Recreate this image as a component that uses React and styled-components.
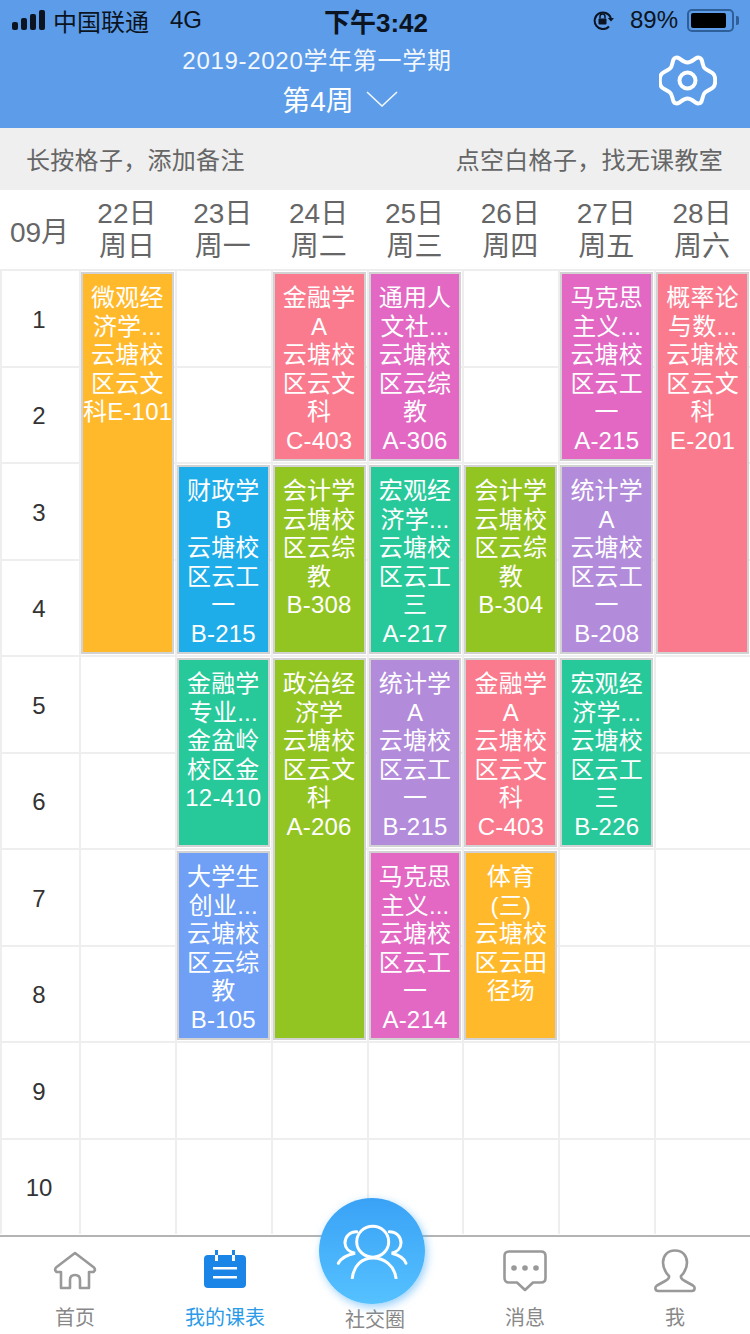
import styled, { createGlobalStyle } from "styled-components";

const fontStack = `"Liberation Sans", "Noto Sans CJK SC", sans-serif`;

const GlobalStyle = createGlobalStyle`
    html, body {
        margin: 0;
        padding: 0;
        background: #fff;
        font-family: ${fontStack};
    }
    * { box-sizing: border-box; }
`;

const Page = styled.div`
    position: relative;
    width: 750px;
    height: 1334px;
    overflow: hidden;
    display: flex;
    flex-direction: column;
    background: #fff;
`;

const TopBlue = styled.div`
    height: 128px;
    background: #5c9ce9;
    flex-shrink: 0;
`;

const StatusBar = styled.div`
    height: 40px;
    padding: 0 16px 0 12px;
    display: flex;
    align-items: center;
    justify-content: space-between;
    color: #0b1420;
    font-size: 24px;
`;

const StatusSide = styled.div`
    flex: 1;
    display: flex;
    align-items: center;
    justify-content: ${(p) => (p.$right ? "flex-end" : "flex-start")};
    gap: ${(p) => p.$gap}px;
`;

const StatusText = styled.span`
    margin-left: ${(p) => p.$ml || 0}px;
`;

const Clock = styled.div`
    padding-left: 6px;
    font-size: 26px;
    font-weight: 700;
    color: #0b1420;
`;

const Battery = styled.div`
    width: 47px;
    height: 23px;
    border: 2px solid #2f5f98;
    border-radius: 5px;
    padding: 2px;
    position: relative;
    &::after {
        content: "";
        position: absolute;
        right: -7px;
        top: 5px;
        width: 3px;
        height: 9px;
        border-radius: 0 2px 2px 0;
        background: #2f5f98;
    }
`;

const BatteryFill = styled.div`
    width: 89%;
    height: 100%;
    background: #000;
    border-radius: 2px;
`;

const TitleBar = styled.div`
    height: 88px;
    display: flex;
    align-items: flex-start;
    justify-content: space-between;
    color: #fff;
`;

const TitleBlock = styled.div`
    width: 634px;
    display: flex;
    flex-direction: column;
    align-items: center;
`;

const Term = styled.div`
    font-size: 24px;
    line-height: 30px;
    margin-top: 6px;
    letter-spacing: 0.7px;
    color: #f2f7fe;
`;

const Week = styled.div`
    margin-top: 10px;
    padding-left: 46px;
    display: flex;
    align-items: center;
    gap: 12px;
    font-size: 28px;
    line-height: 32px;
`;

const Chevron = styled.svg`
    margin-top: -7px;
`;

const GearWrap = styled.div`
    width: 58px;
    height: 58px;
    margin: 15px 33px 0 0;
`;

const TipBar = styled.div`
    height: 62px;
    flex-shrink: 0;
    background: #efefef;
    padding: 0 27px 2px 26px;
    display: flex;
    align-items: center;
    justify-content: space-between;
    font-size: 24px;
    letter-spacing: 0.3px;
    color: #666;
`;

const DateRow = styled.div`
    height: 80px;
    flex-shrink: 0;
    display: grid;
    grid-template-columns: 79px repeat(7, 1fr);
    align-items: center;
    color: #666;
    font-size: 28px;
    text-align: center;
`;

const DateCell = styled.div`
    line-height: 33px;
`;

const Table = styled.div`
    display: grid;
    grid-template-columns: 79px repeat(7, 1fr);
    grid-template-rows: repeat(10, 96.5px);
    height: 966px;
    margin-top: -1px;
    flex-shrink: 0;
`;

const Cell = styled.div`
    grid-column: ${(p) => p.$col};
    grid-row: ${(p) => p.$row};
    border-left: 2px solid #eeeeee;
    border-top: 2px solid #eeeeee;
    display: flex;
    align-items: center;
    justify-content: center;
    padding: 3px 3px 0 0;
    color: #333;
    font-size: 24px;
`;

const Course = styled.div`
    grid-column: ${(p) => p.$col};
    grid-row: ${(p) => p.$row} / span ${(p) => p.$span};
    z-index: 1;
    margin: 3px 1px 1px 2px;
    border: 2px solid #d2d2d2;
    background: ${(p) => p.$color};
    color: #fff;
    font-size: 24px;
    line-height: 28.6px;
    letter-spacing: 0.2px;
    text-align: center;
    padding-top: 10px;
    white-space: nowrap;
    overflow: hidden;
`;

const TabBar = styled.div`
    flex: 1;
    border-top: 2px solid #b4b4b4;
    display: grid;
    grid-template-columns: repeat(5, 1fr);
    background: #fff;
`;

const Tab = styled.div`
    display: flex;
    flex-direction: column;
    align-items: center;
    justify-content: flex-end;
    padding-bottom: ${(p) => (p.$low ? 1 : 3)}px;
    color: ${(p) => (p.$active ? "#2b9be8" : "#888")};
    font-size: 20px;
    line-height: 26px;
`;

const TabIcon = styled.div`
    height: 44px;
    margin-bottom: 12px;
    display: flex;
    align-items: center;
    justify-content: center;
`;

const SocialButton = styled.div`
    position: absolute;
    left: 319px;
    top: 1198px;
    width: 106px;
    height: 106px;
    border-radius: 50%;
    background: linear-gradient(180deg, #3aa2f6 0%, #55c1ff 100%);
    box-shadow: 2px 3px 8px rgba(70, 170, 245, 0.55);
    display: flex;
    align-items: center;
    justify-content: center;
    z-index: 2;
`;

const dates = [
    ["22日", "周日"], ["23日", "周一"], ["24日", "周二"], ["25日", "周三"],
    ["26日", "周四"], ["27日", "周五"], ["28日", "周六"],
];

const amber = "#ffb92b";
const blue = "#1fade9";
const teal = "#27c99b";
const periwinkle = "#6fa0f6";
const pink = "#fb7b8e";
const lime = "#93c522";
const magenta = "#e268c3";
const purple = "#b28bda";

// col: 周日 = 2, row 从 1 开始
const courses = [
    { col: 2, row: 1, span: 4, color: amber, lines: ["微观经", "济学...", "云塘校", "区云文", "科E-101"] },
    { col: 3, row: 3, span: 2, color: blue, lines: ["财政学", "B", "云塘校", "区云工", "一", "B-215"] },
    { col: 3, row: 5, span: 2, color: teal, lines: ["金融学", "专业...", "金盆岭", "校区金", "12-410"] },
    { col: 3, row: 7, span: 2, color: periwinkle, lines: ["大学生", "创业...", "云塘校", "区云综", "教", "B-105"] },
    { col: 4, row: 1, span: 2, color: pink, lines: ["金融学", "A", "云塘校", "区云文", "科", "C-403"] },
    { col: 4, row: 3, span: 2, color: lime, lines: ["会计学", "云塘校", "区云综", "教", "B-308"] },
    { col: 4, row: 5, span: 4, color: lime, lines: ["政治经", "济学", "云塘校", "区云文", "科", "A-206"] },
    { col: 5, row: 1, span: 2, color: magenta, lines: ["通用人", "文社...", "云塘校", "区云综", "教", "A-306"] },
    { col: 5, row: 3, span: 2, color: teal, lines: ["宏观经", "济学...", "云塘校", "区云工", "三", "A-217"] },
    { col: 5, row: 5, span: 2, color: purple, lines: ["统计学", "A", "云塘校", "区云工", "一", "B-215"] },
    { col: 5, row: 7, span: 2, color: magenta, lines: ["马克思", "主义...", "云塘校", "区云工", "一", "A-214"] },
    { col: 6, row: 3, span: 2, color: lime, lines: ["会计学", "云塘校", "区云综", "教", "B-304"] },
    { col: 6, row: 5, span: 2, color: pink, lines: ["金融学", "A", "云塘校", "区云文", "科", "C-403"] },
    { col: 6, row: 7, span: 2, color: amber, lines: ["体育", "(三)", "云塘校", "区云田", "径场"] },
    { col: 7, row: 1, span: 2, color: magenta, lines: ["马克思", "主义...", "云塘校", "区云工", "一", "A-215"] },
    { col: 7, row: 3, span: 2, color: purple, lines: ["统计学", "A", "云塘校", "区云工", "一", "B-208"] },
    { col: 7, row: 5, span: 2, color: teal, lines: ["宏观经", "济学...", "云塘校", "区云工", "三", "B-226"] },
    { col: 8, row: 1, span: 4, color: pink, lines: ["概率论", "与数...", "云塘校", "区云文", "科", "E-201"] },
];

const rows = Array.from({ length: 10 }, (_, i) => i + 1);
const cols = [2, 3, 4, 5, 6, 7, 8];

function SignalIcon() {
    return (
        <svg width="36" height="20" viewBox="0 0 36 20">
            <rect x="0" y="12" width="6" height="8" rx="2" fill="#0b1420" />
            <rect x="9" y="8" width="6" height="12" rx="2" fill="#0b1420" />
            <rect x="18" y="4" width="6" height="16" rx="2" fill="#0b1420" />
            <rect x="27" y="0" width="6" height="20" rx="2" fill="#0b1420" />
        </svg>
    );
}

function LockIcon() {
    return (
        <svg width="22" height="20" viewBox="0 0 22 20" fill="none">
            <path d="M16 16.500 A8.300 8.300 0 1 1 17.800 8" stroke="#0b1420" strokeWidth="2" />
            <path d="M14.800 8 L21 8 L18 11.500 Z" fill="#0b1420" />
            <rect x="5.500" y="8.500" width="8" height="6" rx="1" fill="#0b1420" />
            <path d="M7 8.500 V6.500 A2.500 2.500 0 0 1 12 6.500 V8.500" stroke="#0b1420" strokeWidth="1.500" />
        </svg>
    );
}

function ChevronIcon() {
    return (
        <Chevron width="32" height="16" viewBox="0 0 32 16" fill="none">
            <path d="M1 1 L16 15 L31 1" stroke="#f2f7fe" strokeWidth="1.600" />
        </Chevron>
    );
}

function GearIcon() {
    return (
        <svg width="58" height="58" viewBox="0 0 58 58" fill="none" stroke="#fff" strokeWidth="4" strokeLinejoin="round">
            <path d="M28.500 7.500 C32 7.500 34.500 5 37 3.200 C39 2 41.500 2.500 42.500 4.500 C44 8 43.500 11.500 46 13.500 C48.500 15.500 51.500 16.500 54 18.500 C57 21 57 30 54 32.500 C51.500 34.500 48.500 35.500 46 37.500 C43.500 39.500 44 43 42.500 46.500 C41.500 48.500 39 49 37 47.800 C34.500 46 32 43.500 28.500 43.500 C25 43.500 22.500 46 20 47.800 C18 49 15.500 48.500 14.500 46.500 C13 43 13.500 39.500 11 37.500 C8.500 35.500 5.500 34.500 3 32.500 C0 30 0 21 3 18.500 C5.500 16.500 8.500 15.500 11 13.500 C13.500 11.500 13 8 14.500 4.500 C15.500 2.500 18 2 20 3.200 C22.500 5 25 7.500 28.500 7.500 Z" />
            <circle cx="28.500" cy="25.500" r="8" />
        </svg>
    );
}

function HomeIcon() {
    return (
        <svg width="44" height="40" viewBox="0 0 44 40" fill="none" stroke="#999" strokeWidth="2.600" strokeLinejoin="round">
            <path d="M8 37 V21 H3.500 Q1 19 3 16.500 L22 2 L41 16.500 Q43 19 40.500 21 H36 V37 H27 V29 Q27 24 22 24 Q17 24 17 29 V37 Z" />
        </svg>
    );
}

function CalendarIcon() {
    return (
        <svg width="44" height="42" viewBox="0 0 44 42">
            <rect x="1" y="5" width="42" height="33" rx="4" fill="#1a85e6" />
            <rect x="12" y="0" width="3" height="5" fill="#1a85e6" />
            <rect x="29" y="0" width="3" height="5" fill="#1a85e6" />
            <rect x="12" y="5" width="3" height="6" fill="#fff" />
            <rect x="29" y="5" width="3" height="6" fill="#fff" />
            <rect x="10" y="17" width="24" height="2.500" fill="#fff" />
            <rect x="10" y="26" width="24" height="2.500" fill="#fff" />
        </svg>
    );
}

function MessageIcon() {
    return (
        <svg width="44" height="42" viewBox="0 0 44 42" fill="none">
            <path d="M6 1.500 H38 Q42.500 1.500 42.500 6 V28 Q42.500 32.500 38 32.500 H30 L22 40 L14 32.500 H6 Q1.500 32.500 1.500 28 V6 Q1.500 1.500 6 1.500 Z" stroke="#999" strokeWidth="2.600" strokeLinejoin="round" />
            <circle cx="11" cy="18" r="2.800" fill="#999" />
            <circle cx="22" cy="18" r="2.800" fill="#999" />
            <circle cx="33" cy="18" r="2.800" fill="#999" />
        </svg>
    );
}

function PersonIcon() {
    return (
        <svg width="42" height="44" viewBox="0 0 42 44" fill="none">
            <path d="M21 1.500 C13 1.500 9 7 9 13.500 C9 20 12 24 15 27 C15.500 29 14.500 30 12 31.500 L3 36.500 C0.500 38 1 42 4 42 H38 C41 42 41.500 38 39 36.500 L30 31.500 C27.500 30 26.500 29 27 27 C30 24 33 20 33 13.500 C33 7 29 1.500 21 1.500 Z" stroke="#999" strokeWidth="2.600" strokeLinejoin="round" />
        </svg>
    );
}

function GroupIcon() {
    return (
        <svg width="72" height="56" viewBox="0 0 72 56" fill="none" stroke="#fff" strokeWidth="3" strokeLinecap="round">
            <ellipse cx="36.700" cy="18.700" rx="16" ry="15.500" />
            <path d="M16.300 55 C18 42 26 35 37 35 C48 35 58 42 60 55" />
            <path d="M20.700 8.700 C13 9 9 14 9 20 C9 25 13 29 19 30.300 C11 32 5 35 2.300 40.300" />
            <path d="M53.300 8.700 C61 9 65 14 65 20 C65 25 61 29 55.700 30.300 C63 32 68 35 70 40.300" />
        </svg>
    );
}

function App() {
    return (
        <Page>
            <GlobalStyle />
            <TopBlue>
                <StatusBar>
                    <StatusSide $gap={5}>
                        <SignalIcon />
                        <span>中国联通</span>
                        <StatusText $ml={16}>4G</StatusText>
                    </StatusSide>
                    <Clock>下午3:42</Clock>
                    <StatusSide $right $gap={9}>
                        <LockIcon />
                        <StatusText $ml={6}>89%</StatusText>
                        <Battery><BatteryFill /></Battery>
                    </StatusSide>
                </StatusBar>
                <TitleBar>
                    <TitleBlock>
                        <Term>2019-2020学年第一学期</Term>
                        <Week>
                            第4周
                            <ChevronIcon />
                        </Week>
                    </TitleBlock>
                    <GearWrap><GearIcon /></GearWrap>
                </TitleBar>
            </TopBlue>

            <TipBar>
                <span>长按格子，添加备注</span>
                <span>点空白格子，找无课教室</span>
            </TipBar>

            <DateRow>
                <div>09月</div>
                {dates.map(([day, week]) => (
                    <DateCell key={day}>{day}<br />{week}</DateCell>
                ))}
            </DateRow>

            <Table>
                {rows.map((r) => (
                    <Cell key={r} $col={1} $row={r}>{r}</Cell>
                ))}
                {rows.map((r) => cols.map((c) => (
                    <Cell key={`${r}-${c}`} $col={c} $row={r} />
                )))}
                {courses.map((item) => (
                    <Course key={`${item.col}-${item.row}`} $col={item.col} $row={item.row} $span={item.span} $color={item.color}>
                        {item.lines.map((line, i) => <div key={i}>{line}</div>)}
                    </Course>
                ))}
            </Table>

            <TabBar>
                <Tab><TabIcon><HomeIcon /></TabIcon>首页</Tab>
                <Tab $active><TabIcon><CalendarIcon /></TabIcon>我的课表</Tab>
                <Tab $low>社交圈</Tab>
                <Tab><TabIcon><MessageIcon /></TabIcon>消息</Tab>
                <Tab><TabIcon><PersonIcon /></TabIcon>我</Tab>
            </TabBar>
            <SocialButton><GroupIcon /></SocialButton>
        </Page>
    );
}

export default App;
